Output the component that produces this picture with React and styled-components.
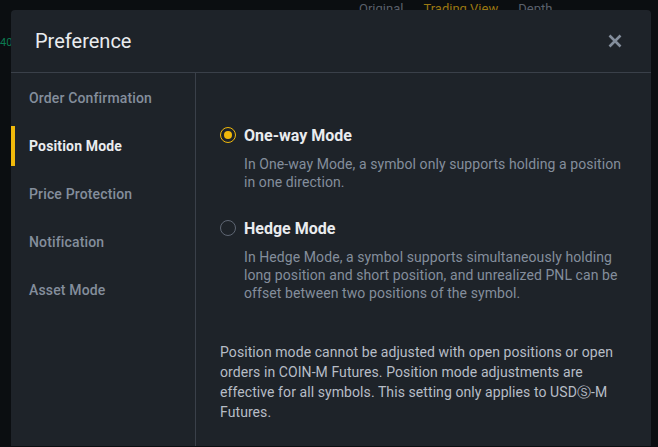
import React from "react";
import styled, { createGlobalStyle } from "styled-components";

const menu = [
  "Order Confirmation",
  "Position Mode",
  "Price Protection",
  "Notification",
  "Asset Mode",
];

const modes = [
  {
    title: "One-way Mode",
    text: "In One-way Mode, a symbol only supports holding a position in one direction.",
    checked: true,
  },
  {
    title: "Hedge Mode",
    text: "In Hedge Mode, a symbol supports simultaneously holding long position and short position, and unrealized PNL can be offset between two positions of the symbol.",
    checked: false,
  },
];

const App = () => (
  <Page>
    <GlobalStyle />
    <TopTabs>
      <Tab>Original</Tab>
      <Tab active>Trading View</Tab>
      <Tab>Depth</Tab>
    </TopTabs>
    <PriceTag>40</PriceTag>
    <Modal>
      <Header>
        <Title>Preference</Title>
        <Close aria-label="close">
          <svg width="14" height="14" viewBox="0 0 14 14">
            <path d="M1.5 1.5l11 11M12.5 1.5l-11 11" stroke="#848e9c" strokeWidth="2.6" />
          </svg>
        </Close>
      </Header>
      <Body>
        <Sidebar>
          {menu.map((m) => (
            <MenuItem key={m} active={m === "Position Mode"}>
              {m}
            </MenuItem>
          ))}
        </Sidebar>
        <Content>
          <Options>
            {modes.map((m) => (
              <Option key={m.title}>
                <OptionRow>
                  <Radio checked={m.checked} />
                  <OptionTitle>{m.title}</OptionTitle>
                </OptionRow>
                <OptionText>{m.text}</OptionText>
              </Option>
            ))}
          </Options>
          <Note>
            Position mode cannot be adjusted with open positions or open orders in COIN-M
            Futures. Position mode adjustments are effective for all symbols. This setting
            only applies to USDⓈ-M Futures.
          </Note>
        </Content>
      </Body>
    </Modal>
  </Page>
);

const GlobalStyle = createGlobalStyle`
  html, body {
    margin: 0;
    background: #0b0e11;
  }
  * {
    box-sizing: border-box;
  }
`;

const Page = styled.div`
  position: relative;
  width: 658px;
  height: 447px;
  overflow: hidden;
  background: #0b0e11;
  font-family: Roboto, "Liberation Sans", sans-serif;
`;

const TopTabs = styled.div`
  display: flex;
  gap: 20px;
  padding: 1px 0 0 359px;
  font-size: 13px;
  line-height: 16px;
`;

const Tab = styled.span`
  color: ${(p) => (p.active ? "#9a7712" : "#5a606b")};
`;

const PriceTag = styled.span`
  position: absolute;
  left: 0;
  top: 36px;
  font-size: 11px;
  color: #0c7a50;
`;

const Modal = styled.div`
  position: absolute;
  left: 11px;
  top: 10px;
  width: 640px;
  height: 436px;
  display: flex;
  flex-direction: column;
  background: #1e2329;
  border-radius: 4px 4px 0 0;
`;

const Header = styled.div`
  display: flex;
  align-items: center;
  justify-content: space-between;
  height: 63px;
  padding: 0 29px 0 24px;
  border-bottom: 1px solid #3a4049;
`;

const Title = styled.h2`
  margin: 0;
  font-size: 20px;
  font-weight: 400;
  color: #eaecef;
`;

const Close = styled.button`
  display: flex;
  padding: 0;
  border: 0;
  background: none;
  cursor: pointer;
`;

const Body = styled.div`
  display: flex;
  flex: 1;
`;

const Sidebar = styled.nav`
  width: 185px;
  display: flex;
  flex-direction: column;
  gap: 8px;
  padding-top: 5px;
  border-right: 1px solid #3a4049;
`;

const MenuItem = styled.div`
  height: 40px;
  display: flex;
  align-items: center;
  padding-left: 14px;
  font-size: 14px;
  letter-spacing: 0.15px;
  font-weight: ${(p) => (p.active ? 700 : 500)};
  color: ${(p) => (p.active ? "#eaecef" : "#848e9c")};
  border-left: 4px solid ${(p) => (p.active ? "#f0b90b" : "transparent")};
`;

const Content = styled.div`
  flex: 1;
  display: flex;
  flex-direction: column;
  gap: 40px;
  padding: 50px 24px 24px 24px;
`;

const Options = styled.div`
  display: flex;
  flex-direction: column;
  gap: 25px;
`;

const Option = styled.div`
  display: flex;
  flex-direction: column;
  gap: 8px;
`;

const OptionRow = styled.label`
  display: flex;
  align-items: center;
  gap: 8px;
  height: 24px;
`;

const Radio = styled.span`
  position: relative;
  width: 16px;
  height: 16px;
  border-radius: 50%;
  border: ${(p) => (p.checked ? "1.5px solid #f0b90b" : "1px solid #5e6673")};
  &::after {
    content: "";
    display: ${(p) => (p.checked ? "block" : "none")};
    position: absolute;
    left: 50%;
    top: 50%;
    width: 8px;
    height: 8px;
    margin: -4px 0 0 -4px;
    border-radius: 50%;
    background: #f0b90b;
  }
`;

const OptionTitle = styled.span`
  font-size: 16px;
  font-weight: 700;
  color: #eaecef;
`;

const OptionText = styled.p`
  margin: 0 0 0 24px;
  font-size: 14px;
  line-height: 18px;
  letter-spacing: 0.08px;
  color: #848e9c;
`;

const Note = styled.p`
  margin: 0;
  font-size: 14px;
  line-height: 20px;
  letter-spacing: 0.08px;
  color: #b7bdc6;
`;

export default App;
